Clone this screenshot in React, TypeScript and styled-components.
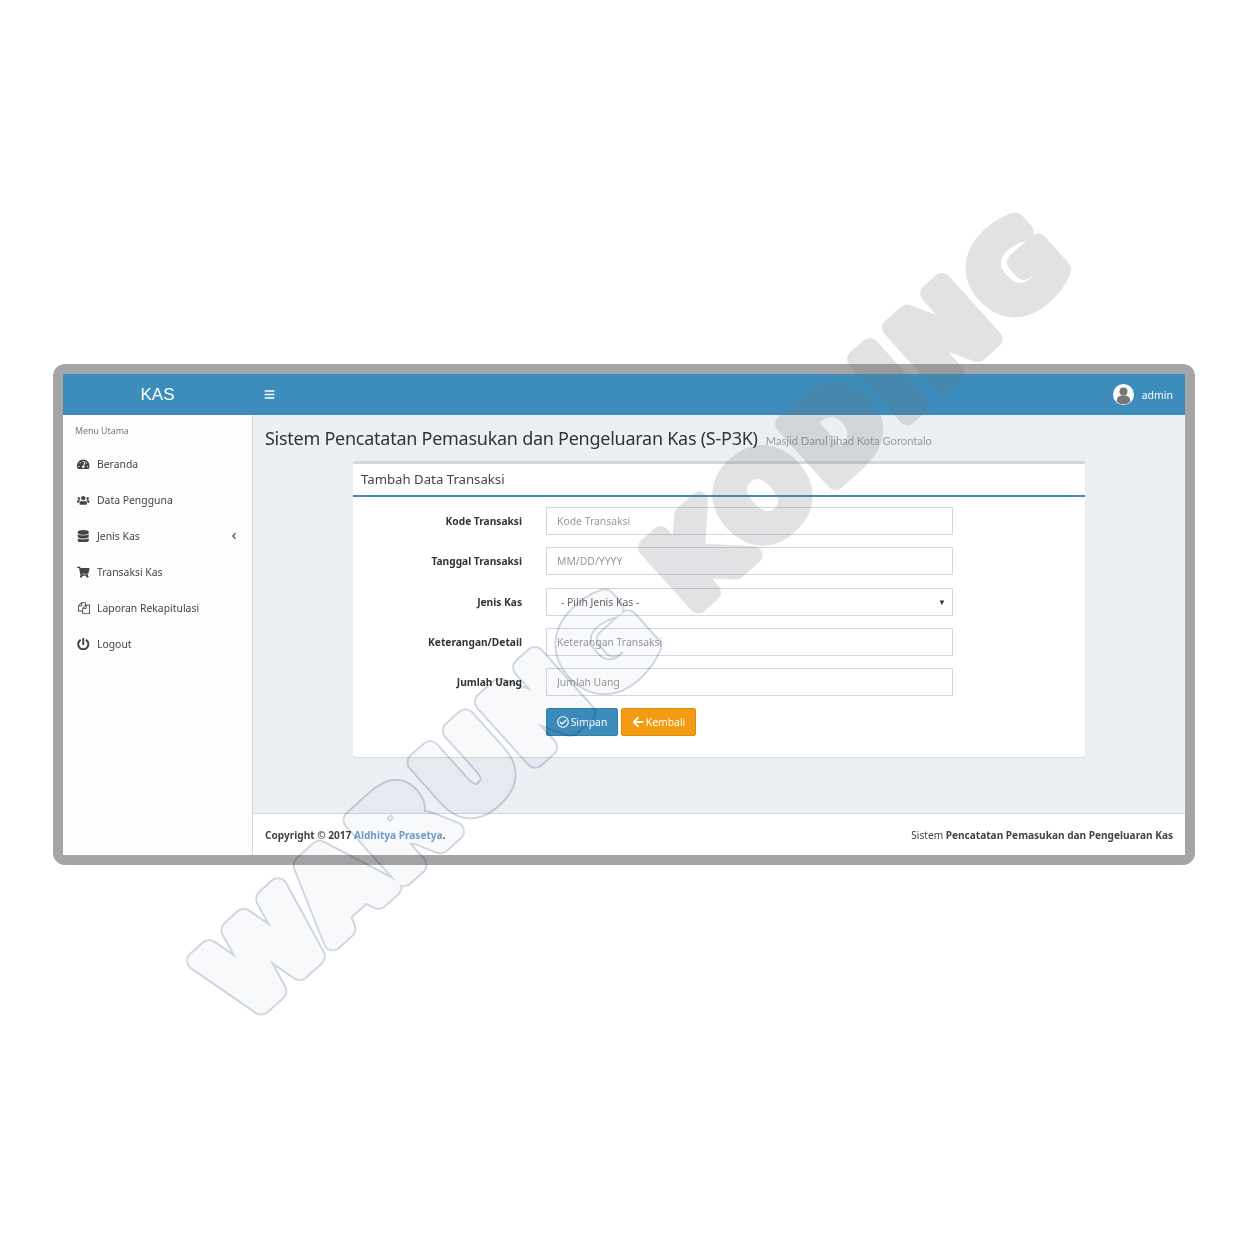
import React from "react";
import styled, { createGlobalStyle } from "styled-components";
import {
  FaAngleLeft,
  FaArrowLeft,
  FaBars,
  FaDatabase,
  FaPowerOff,
  FaRegCheckCircle,
  FaShoppingCart,
  FaTachometerAlt,
  FaUsers,
} from "react-icons/fa";

const GlobalStyle = createGlobalStyle`
  html, body {
    margin: 0;
    background: #fff;
  }

  * {
    box-sizing: border-box;
  }

  body {
    font-family: "Noto Sans", "Open Sans", sans-serif;
    color: #333;
  }
`;

// round halo around the watermark letters, made of offset text shadows
const ring = (radius: number, color: string) =>
  Array.from({ length: 28 }, (_, i) => {
    const a = (i / 28) * Math.PI * 2;
    return `${(Math.cos(a) * radius).toFixed(1)}px ${(Math.sin(a) * radius).toFixed(1)}px 0 ${color}`;
  }).join(", ");

const Page = styled.div`
  position: relative;
  width: 1250px;
  height: 1250px;
  padding: 364px 55px 0 53px;
  overflow: hidden;
`;

const Frame = styled.div`
  width: 1142px;
  height: 501px;
  border: 10px solid #a5a5a5;
  border-radius: 12px;
  display: flex;
  flex-direction: column;
  background: #ecf0f5;
`;

const TopBar = styled.header`
  height: 41px;
  flex: none;
  background: #3c8dbc;
  display: flex;
  align-items: center;
  color: #fff;
`;

const Logo = styled.div`
  width: 189px;
  text-align: center;
  font-family: "Liberation Sans", Arial, sans-serif;
  font-size: 17px;
`;

const MenuToggle = styled.button`
  background: none;
  border: 0;
  padding: 0 0 0 12px;
  color: #fff;
  display: flex;
  font-size: 11px;
`;

const UserMenu = styled.div`
  margin-left: auto;
  padding-right: 12px;
  display: flex;
  align-items: center;
  gap: 8px;
  font-size: 10.5px;
`;

const Avatar = styled.svg`
  width: 21px;
  height: 21px;
  flex: none;
`;

const Body = styled.div`
  flex: 1;
  display: flex;
  min-height: 0;
`;

const Sidebar = styled.aside`
  width: 190px;
  flex: none;
  background: #fdfdfe;
  border-right: 1px solid #d2d6de;
  padding-top: 10px;
`;

const SideHeading = styled.div`
  padding-left: 12px;
  font-size: 8.8px;
  line-height: 12px;
  color: #777;
  margin-bottom: 9px;
`;

const SideList = styled.ul`
  list-style: none;
  margin: 0;
  padding: 0;
`;

const SideItem = styled.li`
  height: 36px;
  padding: 0 13px 0 14px;
  display: flex;
  align-items: center;
  font-size: 10.4px;
  color: #444;
`;

const SideIcon = styled.span`
  width: 13px;
  margin-right: 7px;
  display: flex;
  justify-content: center;
  font-size: 12.5px;
`;

const FilesIcon = styled.svg`
  width: 12px;
  height: 12px;
  fill: currentColor;
`;

const Caret = styled.span`
  margin-left: auto;
  display: flex;
  font-size: 10px;
  color: #666;
`;

const Main = styled.main`
  flex: 1;
  min-width: 0;
  display: flex;
  flex-direction: column;
`;

const Content = styled.div`
  flex: 1;
  padding: 10px 12px 0;
`;

const TitleRow = styled.div`
  display: flex;
  align-items: baseline;
  gap: 8px;
  height: 36px;
`;

const Title = styled.h1`
  margin: 0;
  font-size: 18px;
  font-weight: 400;
  letter-spacing: -0.26px;
  line-height: 27px;
  color: #333;
  white-space: nowrap;
`;

const Subtitle = styled.small`
  font-family: "Lato", sans-serif;
  font-size: 11.2px;
  color: #999;
  white-space: nowrap;
`;

const Card = styled.section`
  width: 732px;
  height: 296px;
  margin-left: 88px;
  background: #fff;
  border-top: 3px solid #d2d6de;
  border-radius: 3px;
  box-shadow: 0 1px 1px rgba(0, 0, 0, 0.1);
`;

const CardHeader = styled.div`
  height: 33px;
  padding: 0 0 2px 8px;
  border-bottom: 2px solid #3c8dbc;
  display: flex;
  align-items: center;
  font-size: 13.2px;
  color: #444;
`;

const Form = styled.form`
  padding-top: 10px;
  display: flex;
  flex-direction: column;
  gap: 12.25px;
`;

const Row = styled.div`
  display: flex;
  align-items: center;
`;

const Label = styled.label`
  width: 169px;
  margin-right: 24px;
  text-align: right;
  font-size: 10.2px;
  font-weight: 700;
  color: #333;
`;

const Input = styled.input`
  width: 407px;
  height: 28px;
  padding: 0 10px;
  border: 1px solid #d2d6de;
  background: #fff;
  font-family: inherit;
  font-size: 10.4px;
  outline: none;

  &::placeholder {
    color: #999;
    opacity: 1;
  }
`;

const SelectBox = styled.div`
  width: 407px;
  height: 28px;
  padding: 0 6px 0 14px;
  border: 1px solid #d2d6de;
  display: flex;
  align-items: center;
  justify-content: space-between;
  font-size: 10.4px;
  color: #666;
`;

const SelectArrow = styled.span`
  font-size: 8px;
  color: #333;
`;

const Actions = styled.div`
  display: flex;
  gap: 3px;
  margin-left: 193px;
`;

const Button = styled.button<{ $tone: string; $edge: string; $width: number }>`
  height: 28px;
  width: ${(p) => p.$width}px;
  border: 1px solid ${(p) => p.$edge};
  border-radius: 2px;
  background: ${(p) => p.$tone};
  color: #fff;
  padding: 0;
  display: flex;
  align-items: center;
  justify-content: center;
  gap: 2px;
  font-family: inherit;
  font-size: 10.4px;

  svg {
    font-size: 12px;
  }
`;

const Footer = styled.footer`
  height: 42px;
  flex: none;
  background: #fff;
  border-top: 1px solid #d2d6de;
  padding: 0 12px;
  display: flex;
  align-items: center;
  justify-content: space-between;
  font-size: 10.1px;
  color: #444;
`;

const Copy = styled.strong`
  font-weight: 700;
`;

const FooterLink = styled.a`
  color: #6f9fcb;
`;

const Mark = styled.div<{ $x: number; $y: number; $blend: string }>`
  position: absolute;
  left: ${(p) => p.$x}px;
  top: ${(p) => p.$y}px;
  transform: rotate(-42deg);
  transform-origin: 0 0;
  mix-blend-mode: ${(p) => p.$blend};
  pointer-events: none;
  white-space: nowrap;
  font-family: "DejaVu Sans", sans-serif;
  font-weight: 700;
  font-size: 108px;
  line-height: 1;
`;

const OutlineWord = styled.span`
  display: block;
  letter-spacing: 3px;
  color: #f8f9fb;
  text-shadow: ${ring(7, "#f8f9fb")}, ${ring(3.5, "#f8f9fb")}, ${ring(9, "#d0d6e0")};
`;

const SolidWord = styled.span`
  display: block;
  letter-spacing: 7px;
  color: #6f7378;
  text-shadow: ${ring(8, "#6f7378")}, ${ring(4, "#6f7378")};
  opacity: 0.2;
`;

const menu = [
  { icon: <FaTachometerAlt />, label: "Beranda" },
  { icon: <FaUsers />, label: "Data Pengguna" },
  { icon: <FaDatabase />, label: "Jenis Kas", caret: true },
  { icon: <FaShoppingCart />, label: "Transaksi Kas" },
  {
    icon: (
      <FilesIcon viewBox="0 0 1792 1792">
        <path d="M1696 384q40 0 68 28t28 68v1216q0 40-28 68t-68 28H736q-40 0-68-28t-28-68v-288H96q-40 0-68-28t-28-68V640q0-40 20-88t48-76L476 68q28-28 76-48t88-20h416q40 0 68 28t28 68v328q68-40 128-40h416zm-544 213L853 896h299V597zM512 213L213 512h299V213zm196 647l316-316V128H640v416q0 40-28 68t-68 28H128v640h512v-256q0-40 20-88t48-76zm956 804V512h-384v416q0 40-28 68t-68 28H768v640h896z" />
      </FilesIcon>
    ),
    label: "Laporan Rekapitulasi",
  },
  { icon: <FaPowerOff />, label: "Logout" },
];

const fields = [
  { label: "Kode Transaksi", placeholder: "Kode Transaksi" },
  { label: "Tanggal Transaksi", placeholder: "MM/DD/YYYY" },
  { label: "Jenis Kas", select: "- Pilih Jenis Kas -" },
  { label: "Keterangan/Detail", placeholder: "Keterangan Transaksi" },
  { label: "Jumlah Uang", placeholder: "Jumlah Uang" },
];

export default function App() {
  return (
    <Page>
      <GlobalStyle />
      <Frame>
        <TopBar>
          <Logo>KAS</Logo>
          <MenuToggle type="button" aria-label="Menu">
            <FaBars />
          </MenuToggle>
          <UserMenu>
            <Avatar viewBox="0 0 21 21">
              <circle cx="10.5" cy="10.5" r="10.5" fill="#fff" />
              <circle cx="10.5" cy="7.6" r="4" fill="#777" />
              <path d="M3.6 17.4c.3-4 2.6-5.6 4.6-5.8h4.6c2 .2 4.3 1.8 4.6 5.8a9.6 9.6 0 0 1-13.8 0z" fill="#777" />
            </Avatar>
            admin
          </UserMenu>
        </TopBar>
        <Body>
          <Sidebar>
            <SideHeading>Menu Utama</SideHeading>
            <SideList>
              {menu.map((item) => (
                <SideItem key={item.label}>
                  <SideIcon>{item.icon}</SideIcon>
                  {item.label}
                  {item.caret && (
                    <Caret>
                      <FaAngleLeft />
                    </Caret>
                  )}
                </SideItem>
              ))}
            </SideList>
          </Sidebar>
          <Main>
            <Content>
              <TitleRow>
                <Title>Sistem Pencatatan Pemasukan dan Pengeluaran Kas (S-P3K)</Title>
                <Subtitle>Masjid Darul jihad Kota Gorontalo</Subtitle>
              </TitleRow>
              <Card>
                <CardHeader>Tambah Data Transaksi</CardHeader>
                <Form>
                  {fields.map((field) => (
                    <Row key={field.label}>
                      <Label>{field.label}</Label>
                      {field.select ? (
                        <SelectBox>
                          {field.select}
                          <SelectArrow>▼</SelectArrow>
                        </SelectBox>
                      ) : (
                        <Input placeholder={field.placeholder} />
                      )}
                    </Row>
                  ))}
                  <Actions>
                    <Button type="button" $tone="#3c8dbc" $edge="#367fa9" $width={72}>
                      <FaRegCheckCircle /> Simpan
                    </Button>
                    <Button type="button" $tone="#f39c12" $edge="#e08e0b" $width={75}>
                      <FaArrowLeft /> Kembali
                    </Button>
                  </Actions>
                </Form>
              </Card>
            </Content>
            <Footer>
              <Copy>
                Copyright © 2017 <FooterLink>Aldhitya Prasetya</FooterLink>.
              </Copy>
              <span>
                Sistem <Copy>Pencatatan Pemasukan dan Pengeluaran Kas</Copy>
              </span>
            </Footer>
          </Main>
        </Body>
      </Frame>
      <Mark $x={184} $y={954} $blend="multiply">
        <OutlineWord>WARUNG</OutlineWord>
      </Mark>
      <Mark $x={630} $y={545} $blend="normal">
        <SolidWord>KODING</SolidWord>
      </Mark>
    </Page>
  );
}
